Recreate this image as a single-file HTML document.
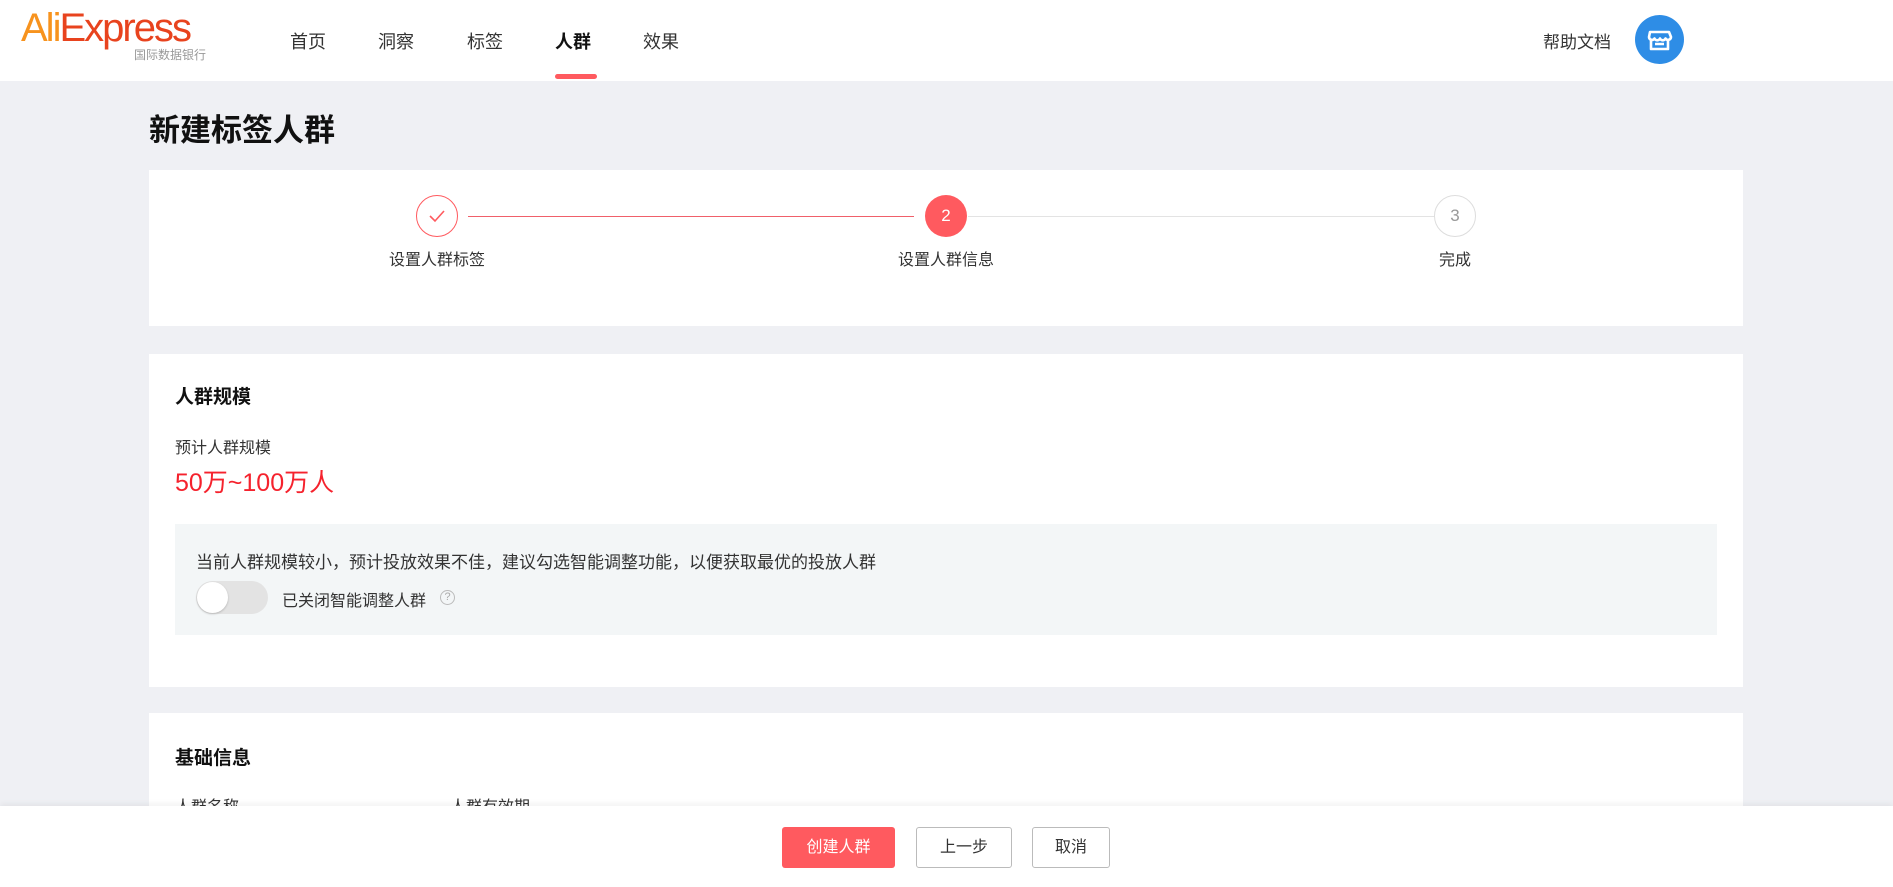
<!DOCTYPE html>
<html><head><meta charset="utf-8"><style>
*{margin:0;padding:0;box-sizing:border-box}
html{height:887px;overflow:hidden}
body{width:1893px;height:887px;overflow:hidden;background:#eff0f4;font-family:"Liberation Sans","Noto Sans CJK SC",sans-serif;color:#222;position:relative}
.a{position:absolute;white-space:nowrap}
.hdr{position:absolute;left:0;top:0;width:1893px;height:81px;background:#fff}
.nav{font-size:18px;color:#333;top:28px}
.card{position:absolute;background:#fff;left:149px;width:1594px}
.circ{position:absolute;width:42px;height:42px;border-radius:50%;top:195px;text-align:center;line-height:40px;font-size:17px}
.lbl{font-size:16px;color:#333;top:246px;transform:translateX(-50%)}
.btn{position:absolute;top:827px;height:41px;border-radius:3px;font-size:16px;text-align:center;line-height:39px}
</style></head><body>
<div class="hdr"></div>
<div class="a" style="left:21px;top:6px;font-size:40px;letter-spacing:-2px;font-family:'Liberation Sans',sans-serif"><span style="color:#f7931e">Ali</span><span style="color:#e8431e">Express</span></div>
<div class="a" style="left:134px;top:46px;font-size:12px;color:#999">国际数据银行</div>
<div class="a nav" style="left:290px">首页</div>
<div class="a nav" style="left:378px">洞察</div>
<div class="a nav" style="left:467px">标签</div>
<div class="a nav" style="left:555px;font-weight:bold;color:#111">人群</div>
<div class="a nav" style="left:643px">效果</div>
<div class="a" style="left:555px;top:74px;width:42px;height:5px;border-radius:3px;background:#ff5a5f"></div>
<div class="a" style="left:1543px;top:28px;font-size:17px;color:#333">帮助文档</div>
<div class="a" style="left:1635px;top:15px;width:49px;height:49px;border-radius:50%;background:#2e8de6">
<svg width="49" height="49" viewBox="0 0 49 49"><g fill="none" stroke="#fff" stroke-width="2.6" stroke-linejoin="round"><path d="M15 17h19l2 5a3 3 0 0 1-5.5 1.5a3 3 0 0 1-5.5 0a3 3 0 0 1-5.5 0a3 3 0 0 1-5.5-1.5z"/><path d="M16 25v9h17v-9M20 29h9"/></g></svg></div>

<div class="a" style="left:149px;top:105px;font-size:31px;font-weight:bold;color:#111">新建标签人群</div>

<div class="card" style="top:170px;height:156px"></div>
<div class="a" style="left:468px;top:216px;width:446px;height:1px;background:#f0606a"></div>
<div class="a" style="left:968px;top:216px;width:466px;height:1px;background:#e3e3e3"></div>
<div class="circ" style="left:416px;border:1px solid #ff5a5f;color:#ff5a5f"><svg width="18" height="14" viewBox="0 0 18 14" style="margin-top:13px"><path d="M2 7l5 5 9-10" fill="none" stroke="#ff5a5f" stroke-width="1.6"/></svg></div>
<div class="circ" style="left:925px;background:#ff5a5f;color:#fff;line-height:42px">2</div>
<div class="circ" style="left:1434px;border:1px solid #ddd;color:#999">3</div>
<div class="a lbl" style="left:437px">设置人群标签</div>
<div class="a lbl" style="left:946px">设置人群信息</div>
<div class="a lbl" style="left:1455px">完成</div>

<div class="card" style="top:354px;height:333px"></div>
<div class="a" style="left:175px;top:382px;font-size:19px;font-weight:bold;color:#111">人群规模</div>
<div class="a" style="left:175px;top:434px;font-size:16px;color:#333">预计人群规模</div>
<div class="a" style="left:175px;top:463px;font-size:25px;color:#f5222d">50万~100万人</div>
<div class="a" style="left:175px;top:524px;width:1542px;height:111px;background:#f3f6f7"></div>
<div class="a" style="left:196px;top:548px;font-size:17px;color:#333">当前人群规模较小，预计投放效果不佳，建议勾选智能调整功能，以便获取最优的投放人群</div>
<div class="a" style="left:196px;top:581px;width:72px;height:33px;border-radius:17px;background:#e3e3e3"></div>
<div class="a" style="left:197px;top:582px;width:31px;height:31px;border-radius:50%;background:#fff;box-shadow:0 1px 2px rgba(0,0,0,.2)"></div>
<div class="a" style="left:282px;top:587px;font-size:16px;color:#333">已关闭智能调整人群</div>
<div class="a" style="left:440px;top:590px;width:15px;height:15px;border-radius:50%;border:1px solid #bbb;color:#aaa;font-size:11px;text-align:center;line-height:13px">?</div>

<div class="card" style="top:713px;height:174px"></div>
<div class="a" style="left:175px;top:743px;font-size:19px;font-weight:bold;color:#111">基础信息</div>
<div class="a" style="left:175px;top:793px;font-size:16px;color:#333">人群名称</div>
<div class="a" style="left:450px;top:793px;font-size:16px;color:#333">人群有效期</div>

<div class="a" style="left:0;top:806px;width:1893px;height:81px;background:#fff;box-shadow:0 -2px 6px rgba(0,0,0,.06)"></div>
<div class="btn" style="left:782px;width:113px;background:#ff5a5f;color:#fff;line-height:41px">创建人群</div>
<div class="btn" style="left:916px;width:96px;border:1px solid #bbb;color:#333;background:#fff">上一步</div>
<div class="btn" style="left:1032px;width:78px;border:1px solid #bbb;color:#333;background:#fff">取消</div>
</body></html>
